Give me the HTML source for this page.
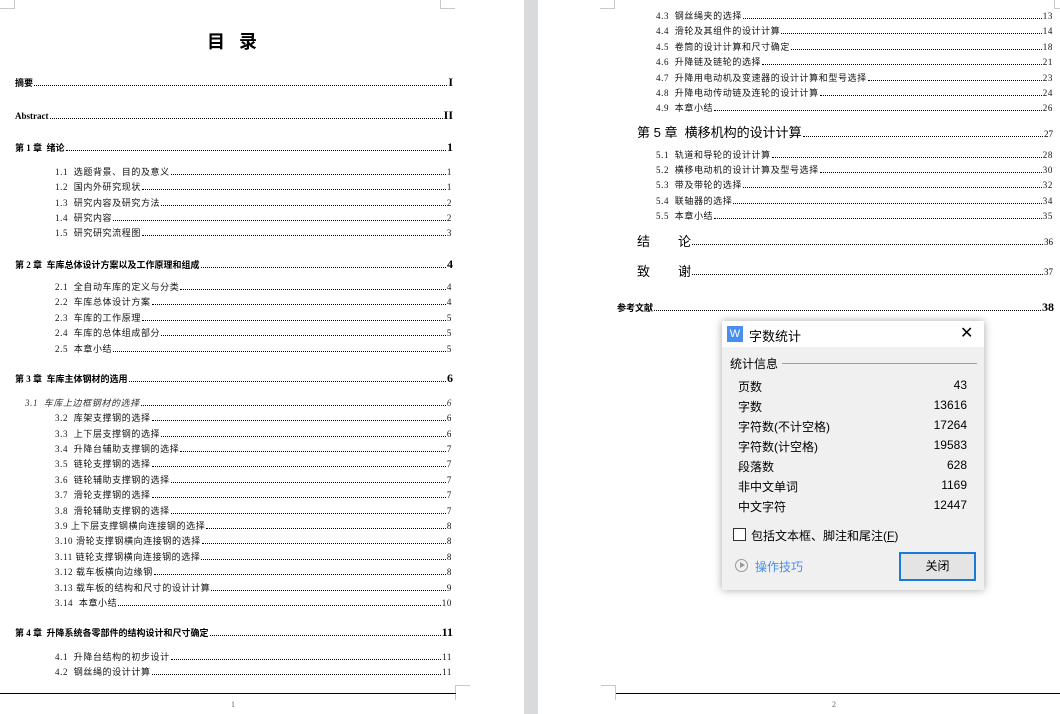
<!DOCTYPE html>
<html><head><meta charset="utf-8"><style>
body{margin:0;width:1060px;height:714px;position:relative;background:#fff;overflow:hidden;font-family:"Liberation Serif","Noto Sans CJK SC",serif;color:#000}
.gut{position:absolute;left:524px;top:0;width:14px;height:714px;background:#d9dadc}
.r{position:absolute;display:flex;align-items:flex-end;white-space:nowrap;line-height:1;font-size:9px;height:11px}
.r i{flex:1;border-bottom:1px dotted #000;margin:0 1px 2px 1px}
.s,.s2{letter-spacing:0.6px;color:#111}
.s{left:55px;width:397px}
.c{left:15px;width:438px;font-weight:bold;font-size:9px;height:12px}
.c b{font-size:12px}
.s2{left:656px;width:397px}
.cn{position:absolute;width:14px;height:14px;border-color:#c8c8c8;border-style:solid}
.dlg{position:absolute;left:722px;top:321px;width:262px;height:269px;background:#f0f0f0;box-shadow:0 0 8px rgba(0,0,0,.35);font-family:"Liberation Sans","Noto Sans CJK SC",sans-serif;font-size:12px}
.row{position:absolute;left:16px;width:229px;display:flex;justify-content:space-between}
</style></head><body>
<div class="gut"></div>
<div class="cn" style="left:0;top:-6px;border-width:0 1px 1px 0"></div>
<div class="cn" style="left:440px;top:-6px;border-width:0 0 1px 1px"></div>
<div class="cn" style="left:600px;top:-6px;border-width:0 1px 1px 0"></div>
<div class="cn" style="left:1054px;top:-6px;border-width:0 0 1px 1px"></div>
<div class="cn" style="left:455px;top:685px;border-width:1px 0 0 1px"></div>
<div class="cn" style="left:601px;top:685px;border-width:1px 1px 0 0"></div>
<div style="position:absolute;left:0;top:693px;width:456px;height:1px;background:#000"></div>
<div style="position:absolute;left:616px;top:693px;width:444px;height:1px;background:#000"></div>
<div style="position:absolute;left:231px;top:700px;font-size:8px;color:#666">1</div>
<div style="position:absolute;left:832px;top:700px;font-size:8px;color:#666">2</div>

<div style="position:absolute;left:207px;top:28px;font-size:18px;font-weight:bold;font-family:'Noto Sans CJK SC',sans-serif;letter-spacing:14px">目录</div>

<div class="r c" style="top:76px">摘要<i></i><b>I</b></div>
<div class="r c" style="top:109px">Abstract<i></i><b>II</b></div>
<div class="r c" style="top:141px">第 1 章 &nbsp;绪论<i></i><b>1</b></div>
<div class="r s" style="top:166px">1.1 &nbsp;选题背景、目的及意义<i></i>1</div>
<div class="r s" style="top:181px">1.2 &nbsp;国内外研究现状<i></i>1</div>
<div class="r s" style="top:197px">1.3 &nbsp;研究内容及研究方法<i></i>2</div>
<div class="r s" style="top:212px">1.4 &nbsp;研究内容<i></i>2</div>
<div class="r s" style="top:227px">1.5 &nbsp;研究研究流程图<i></i>3</div>
<div class="r c" style="top:258px">第 2 章 &nbsp;车库总体设计方案以及工作原理和组成<i></i><b>4</b></div>
<div class="r s" style="top:281px">2.1 &nbsp;全自动车库的定义与分类<i></i>4</div>
<div class="r s" style="top:296px">2.2 &nbsp;车库总体设计方案<i></i>4</div>
<div class="r s" style="top:312px">2.3 &nbsp;车库的工作原理<i></i>5</div>
<div class="r s" style="top:327px">2.4 &nbsp;车库的总体组成部分<i></i>5</div>
<div class="r s" style="top:343px">2.5 &nbsp;本章小结<i></i>5</div>
<div class="r c" style="top:372px">第 3 章 &nbsp;车库主体钢材的选用<i></i><b>6</b></div>
<div class="r" style="top:397px;left:25px;width:427px;font-style:italic;color:#333;letter-spacing:0.6px">3.1 &nbsp;车库上边框钢材的选择<i></i>6</div>
<div class="r s" style="top:412px">3.2 &nbsp;库架支撑钢的选择<i></i>6</div>
<div class="r s" style="top:428px">3.3 &nbsp;上下层支撑钢的选择<i></i>6</div>
<div class="r s" style="top:443px">3.4 &nbsp;升降台辅助支撑钢的选择<i></i>7</div>
<div class="r s" style="top:458px">3.5 &nbsp;链轮支撑钢的选择<i></i>7</div>
<div class="r s" style="top:474px">3.6 &nbsp;链轮辅助支撑钢的选择<i></i>7</div>
<div class="r s" style="top:489px">3.7 &nbsp;滑轮支撑钢的选择<i></i>7</div>
<div class="r s" style="top:505px">3.8 &nbsp;滑轮辅助支撑钢的选择<i></i>7</div>
<div class="r s" style="top:520px">3.9 上下层支撑钢横向连接钢的选择<i></i>8</div>
<div class="r s" style="top:535px">3.10 滑轮支撑钢横向连接钢的选择<i></i>8</div>
<div class="r s" style="top:551px">3.11 链轮支撑钢横向连接钢的选择<i></i>8</div>
<div class="r s" style="top:566px">3.12 载车板横向边缘钢<i></i>8</div>
<div class="r s" style="top:582px">3.13 载车板的结构和尺寸的设计计算<i></i>9</div>
<div class="r s" style="top:597px">3.14 &nbsp;本章小结<i></i>10</div>
<div class="r c" style="top:626px">第 4 章 &nbsp;升降系统各零部件的结构设计和尺寸确定<i></i><b>11</b></div>
<div class="r s" style="top:651px">4.1 &nbsp;升降台结构的初步设计<i></i>11</div>
<div class="r s" style="top:666px">4.2 &nbsp;钢丝绳的设计计算<i></i>11</div>

<div class="r s2" style="top:10px">4.3 &nbsp;钢丝绳夹的选择<i></i>13</div>
<div class="r s2" style="top:25px">4.4 &nbsp;滑轮及其组件的设计计算<i></i>14</div>
<div class="r s2" style="top:41px">4.5 &nbsp;卷筒的设计计算和尺寸确定<i></i>18</div>
<div class="r s2" style="top:56px">4.6 &nbsp;升降链及链轮的选择<i></i>21</div>
<div class="r s2" style="top:72px">4.7 &nbsp;升降用电动机及变速器的设计计算和型号选择<i></i>23</div>
<div class="r s2" style="top:87px">4.8 &nbsp;升降电动传动链及连轮的设计计算<i></i>24</div>
<div class="r s2" style="top:102px">4.9 &nbsp;本章小结<i></i>26</div>
<div class="r" style="top:123px;left:637px;width:416px;height:16px;font-size:13px;font-family:'Liberation Sans','Noto Sans CJK SC',sans-serif">第 5 章 &nbsp;横移机构的设计计算<i></i><span style="font-size:9px;font-family:'Liberation Serif',serif">27</span></div>
<div class="r s2" style="top:149px">5.1 &nbsp;轨道和导轮的设计计算<i></i>28</div>
<div class="r s2" style="top:164px">5.2 &nbsp;横移电动机的设计计算及型号选择<i></i>30</div>
<div class="r s2" style="top:179px">5.3 &nbsp;带及带轮的选择<i></i>32</div>
<div class="r s2" style="top:195px">5.4 &nbsp;联轴器的选择<i></i>34</div>
<div class="r s2" style="top:210px">5.5 &nbsp;本章小结<i></i>35</div>
<div class="r" style="top:232px;left:637px;width:416px;height:15px;font-size:13px;font-family:'Noto Sans CJK SC',sans-serif">结<span style="display:inline-block;width:28px"></span>论<i></i><span style="font-size:9px;font-family:'Liberation Serif',serif">36</span></div>
<div class="r" style="top:262px;left:637px;width:416px;height:15px;font-size:13px;font-family:'Noto Sans CJK SC',sans-serif">致<span style="display:inline-block;width:28px"></span>谢<i></i><span style="font-size:9px;font-family:'Liberation Serif',serif">37</span></div>
<div class="r c" style="top:301px;left:617px;width:437px">参考文献<i></i><b>38</b></div>

<div class="dlg">
  <div style="position:absolute;left:0;top:0;width:262px;height:26px;background:#fff"></div>
  <div style="position:absolute;left:5px;top:5px;width:16px;height:16px;background:#4a8ef0;color:#fff;font-size:11px;line-height:16px;text-align:center">W</div>
  <div style="position:absolute;left:27px;top:5px;font-size:13px">字数统计</div>
  <div style="position:absolute;left:238px;top:2px;font-size:16px">✕</div>
  <div style="position:absolute;left:8px;top:34px">统计信息</div>
  <div style="position:absolute;left:60px;top:42px;width:195px;height:1px;background:#a0a0a0"></div>
  <div class="row" style="top:57px"><span>页数</span><span>43</span></div>
  <div class="row" style="top:77px"><span>字数</span><span>13616</span></div>
  <div class="row" style="top:97px"><span>字符数(不计空格)</span><span>17264</span></div>
  <div class="row" style="top:117px"><span>字符数(计空格)</span><span>19583</span></div>
  <div class="row" style="top:137px"><span>段落数</span><span>628</span></div>
  <div class="row" style="top:157px"><span>非中文单词</span><span>1169</span></div>
  <div class="row" style="top:177px"><span>中文字符</span><span>12447</span></div>
  <div style="position:absolute;left:11px;top:207px;width:11px;height:11px;border:1px solid #333;background:#fff"></div>
  <div style="position:absolute;left:29px;top:206px">包括文本框、脚注和尾注(<u>F</u>)</div>
  <div style="position:absolute;left:13px;top:238px;width:11px;height:11px;border:1px solid #999;border-radius:50%"></div>
  <div style="position:absolute;left:18px;top:241px;width:0;height:0;border-left:5px solid #999;border-top:3px solid transparent;border-bottom:3px solid transparent"></div>
  <div style="position:absolute;left:33px;top:237px;color:#4a8ef0">操作技巧</div>
  <div style="position:absolute;left:177px;top:231px;width:73px;height:25px;border:2px solid #1a7ad8;background:#e4e4e4;text-align:center;line-height:25px">关闭</div>
</div>
</body></html>
